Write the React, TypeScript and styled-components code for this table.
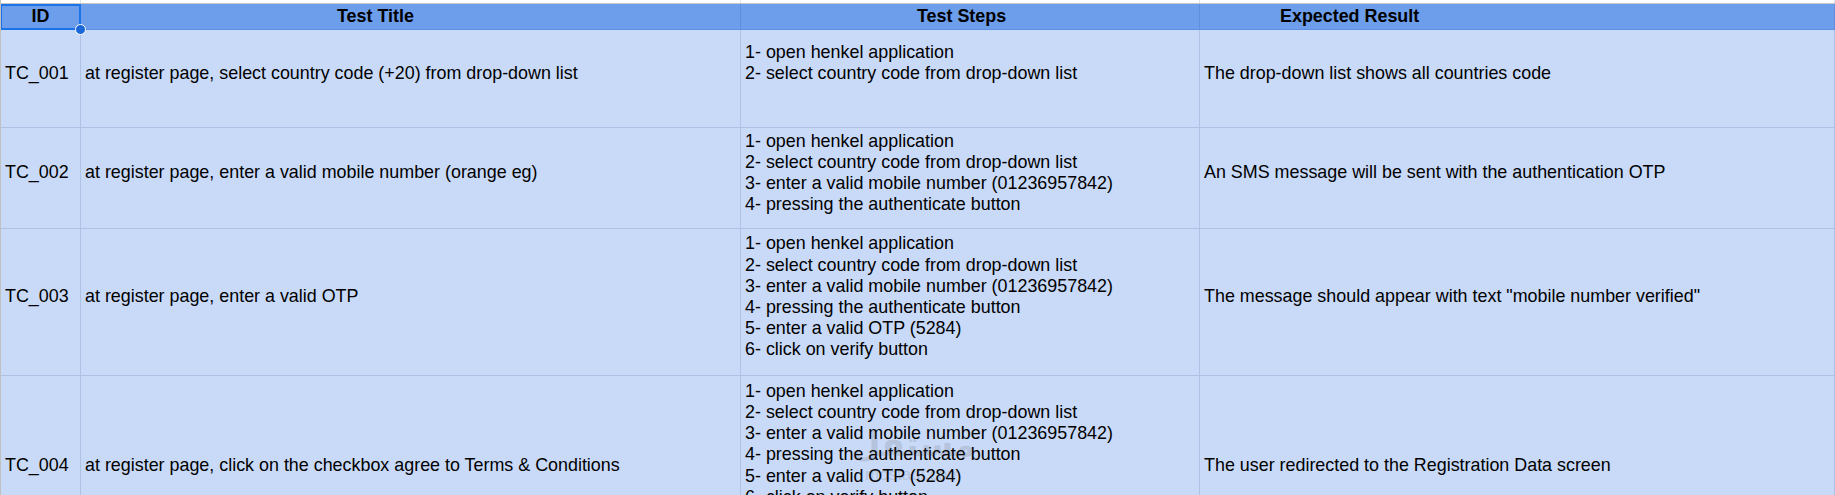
import React from "react";
import styled, { createGlobalStyle } from "styled-components";

const Global = createGlobalStyle`
  html, body { margin: 0; padding: 0; background: #ffffff; overflow: hidden; }
  body { font-family: "Liberation Sans", Arial, sans-serif; }
`;

const COLS = "80px 660px 459px 1fr";

const Sheet = styled.div`
  position: relative;
  width: 1835px;
  height: 495px;
  overflow: hidden;
  background: #ffffff;
  border-left: 1px solid #c0c0c0;
  box-sizing: border-box;
`;

const TopStrip = styled.div`
  display: grid;
  grid-template-columns: ${COLS};
  height: 4px;
  box-sizing: border-box;
  border-bottom: 1px solid #c4c7c5;
`;

const StripCell = styled.div`
  border-right: 1px solid #e1e1e1;
`;

const Row = styled.div<{ $h: number; $header?: boolean }>`
  display: grid;
  grid-template-columns: ${COLS};
  height: ${(p) => p.$h}px;
  background: ${(p) => (p.$header ? "#6d9eeb" : "#c9daf8")};
`;

const HeadCell = styled.div<{ $pl?: number; $center?: boolean }>`
  position: relative;
  display: flex;
  align-items: center;
  justify-content: ${(p) => (p.$center ? "center" : "flex-start")};
  padding-left: ${(p) => p.$pl ?? 0}px;
  box-sizing: border-box;
  border-right: 1px solid #5e8fe0;
  border-bottom: 1px solid #5e8fe0;
  font-weight: 700;
  font-size: 17.9px;
  color: #000;
  white-space: nowrap;
`;

const Selection = styled.div`
  position: absolute;
  left: -1px;
  top: 0;
  right: -1px;
  bottom: -1px;
  border: 2px solid #1a73e8;
  pointer-events: none;
`;

const Handle = styled.div`
  position: absolute;
  right: -6px;
  bottom: -6px;
  width: 9px;
  height: 9px;
  border-radius: 50%;
  background: #1a67d8;
  border: 1px solid #ffffff;
  z-index: 2;
`;

const Cell = styled.div`
  display: flex;
  align-items: center;
  padding: 0 4px 10px 4px;
  box-sizing: border-box;
  border-right: 1px solid #aec2e6;
  border-bottom: 1px solid #aec2e6;
  font-size: 17.9px;
  line-height: 21.2px;
  color: #000;
  white-space: pre;
  overflow: hidden;
`;

const Watermark = styled.div`
  position: absolute;
  left: 850px;
  top: 424px;
  display: flex;
  flex-direction: column;
  align-items: center;
  gap: 2px;
  opacity: 0.13;
  pointer-events: none;
  color: #333;
`;

const WmLogo = styled.span`
  font-family: "DejaVu Sans", sans-serif;
  font-weight: 700;
  font-size: 34px;
  line-height: 40px;
`;

const WmText = styled.span`
  font-family: "Liberation Sans", Arial, sans-serif;
  font-size: 17px;
  line-height: 18px;
`;

type Rec = { id: string; title: string; steps: string; result: string; h: number };

const rows: Rec[] = [
  {
    id: "TC_001",
    title: "at register page, select country code (+20) from drop-down list",
    steps: "1- open henkel application\n2- select country code from drop-down list\n ",
    result: "The drop-down list shows all countries code",
    h: 98,
  },
  {
    id: "TC_002",
    title: "at register page, enter a valid mobile number (orange eg)",
    steps:
      "1- open henkel application\n2- select country code from drop-down list\n3- enter a valid mobile number (01236957842)\n4- pressing the authenticate button",
    result: "An SMS message will be sent with the authentication OTP",
    h: 101,
  },
  {
    id: "TC_003",
    title: "at register page, enter a valid OTP",
    steps:
      "1- open henkel application\n2- select country code from drop-down list\n3- enter a valid mobile number (01236957842)\n4- pressing the authenticate button\n5- enter a valid OTP (5284)\n6- click on verify button",
    result: 'The message should appear with text "mobile number verified"',
    h: 147,
  },
  {
    id: "TC_004",
    title: "at register page, click on the checkbox agree to Terms & Conditions",
    steps:
      "1- open henkel application\n2- select country code from drop-down list\n3- enter a valid mobile number (01236957842)\n4- pressing the authenticate button\n5- enter a valid OTP (5284)\n6- click on verify button\n \n ",
    result: "The user redirected to the Registration Data screen",
    h: 190,
  },
];

export default function App() {
  return (
    <>
      <Global />
      <Sheet>
        <TopStrip>
          <StripCell />
          <StripCell />
          <StripCell />
          <StripCell />
        </TopStrip>
        <Row $h={26} $header>
          <HeadCell $center>
            ID
            <Selection />
            <Handle />
          </HeadCell>
          <HeadCell $pl={256}>Test Title</HeadCell>
          <HeadCell $pl={176}>Test Steps</HeadCell>
          <HeadCell $pl={80}>Expected Result</HeadCell>
        </Row>
        {rows.map((r) => (
          <Row key={r.id} $h={r.h}>
            <Cell>{r.id}</Cell>
            <Cell>{r.title}</Cell>
            <Cell>{r.steps}</Cell>
            <Cell>{r.result}</Cell>
          </Row>
        ))}
        <Watermark>
          <WmLogo>مستقل</WmLogo>
          <WmText>mostaql.com</WmText>
        </Watermark>
      </Sheet>
    </>
  );
}
